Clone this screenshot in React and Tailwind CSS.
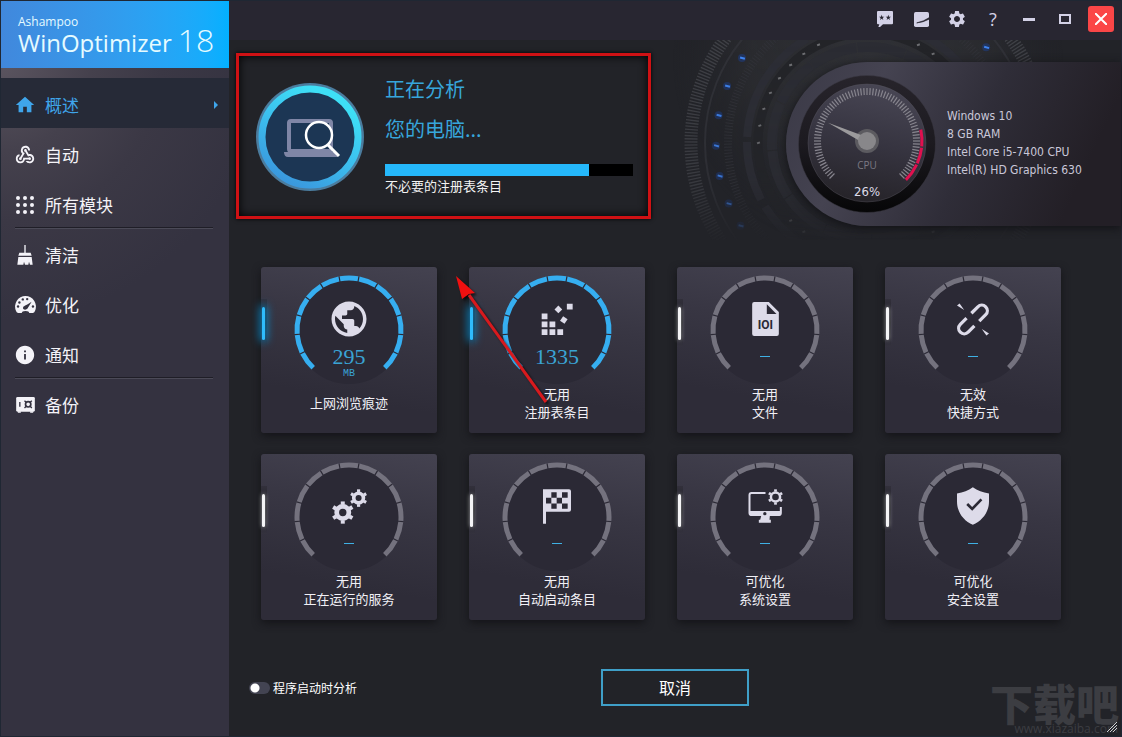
import { useState } from "react";
import { MdHome, MdInfo, MdPublic, MdSettings, MdWebhook } from "react-icons/md";

function polar(cx, cy, r, deg) {
  const a = (deg * Math.PI) / 180;
  return [cx + r * Math.cos(a), cy + r * Math.sin(a)];
}

function arc(cx, cy, r, from, to) {
  const [x1, y1] = polar(cx, cy, r, from);
  const [x2, y2] = polar(cx, cy, r, to);
  return `M${x1} ${y1}A${r} ${r} 0 ${to - from > 180 ? 1 : 0} 1 ${x2} ${y2}`;
}

function range(n) {
  return Array.from({ length: n }, (_, i) => i);
}

/* ---------- icons ---------- */

function ModulesIcon() {
  return (
    <svg viewBox="0 0 54 54" className="h-[18px] w-[18px]" fill="currentColor">
      {range(9).map((i) => (
        <circle key={i} cx={6 + (i % 3) * 21} cy={6 + Math.floor(i / 3) * 21} r="6" />
      ))}
    </svg>
  );
}

function BroomIcon() {
  return (
    <svg viewBox="0 0 48 60" className="h-5 w-4" fill="currentColor">
      <rect x="22" width="4" height="24" />
      <path d="M7 23h34l3 9H4z" />
      <path d="M4 36h40l3 23h-8l-3-9-2 9H24l-3-9-2 9H1z" />
    </svg>
  );
}

function SpeedIcon() {
  return (
    <svg viewBox="0 0 62 50" className="h-[17px] w-[21px]">
      <path
        d="M31 0a31 31 0 0 1 28 44q-2 6-7 6H10q-5 0-7-6A31 31 0 0 1 31 0z"
        fill="currentColor"
      />
      <g fill="#343240">
        <circle cx="9" cy="31" r="3.5" />
        <circle cx="13" cy="19" r="3.5" />
        <circle cx="23" cy="10" r="3.5" />
        <circle cx="36" cy="9" r="3.5" />
        <circle cx="53" cy="31" r="3.5" />
        <path d="M24 33c3-5 9-4 25-16-7 12-9 15-12 20-5 6-16 3-13-4z" />
        <path d="M20 50q0-6 11-6t11 6z" />
      </g>
    </svg>
  );
}

function SafeIcon() {
  return (
    <svg viewBox="0 0 56 48" className="h-4 w-[19px]">
      <rect width="56" height="44" rx="4" fill="currentColor" />
      <path d="M5 43h9v4H5zM42 43h9v4h-9z" fill="currentColor" />
      <g fill="none" stroke="#343240">
        <path d="M11 15v14" strokeWidth="4" />
        <circle cx="36" cy="22" r="8" strokeWidth="5" />
        <path d="M25 11l5 5M47 11l-5 5M25 33l5-5M47 33l-5-5" strokeWidth="4" />
      </g>
    </svg>
  );
}

function GearShape({ cx, cy, r, hole }) {
  return (
    <g stroke="currentColor" fill="none">
      <circle cx={cx} cy={cy} r={(r * 0.76 + hole) / 2} strokeWidth={r * 0.76 - hole} />
      {range(6).map((i) => {
        const [x1, y1] = polar(cx, cy, r * 0.7, i * 60 + 30);
        const [x2, y2] = polar(cx, cy, r, i * 60 + 30);
        return <line key={i} x1={x1} y1={y1} x2={x2} y2={y2} strokeWidth={r * 0.36} />;
      })}
    </g>
  );
}

function RegistryIcon() {
  return (
    <svg viewBox="0 0 94 94" className="h-8 w-8" fill="currentColor">
      <path d="M2 31h17v17H2zM2 54h17v17H2zM25 54h17v17H25zM2 77h17v17H2zM25 77h17v17H25zM48 77h17v17H48zM76 2h17v17H76z" />
      <rect x="43" y="11" width="16" height="16" transform="rotate(45 51 19)" />
      <rect x="59" y="42" width="16" height="16" transform="rotate(35 67 50)" />
    </svg>
  );
}

function FileIcon() {
  return (
    <svg viewBox="0 0 80 102" className="h-[34px] w-[27px]">
      <path
        d="M6 0h44l30 30v66q0 6-6 6H6q-6 0-6-6V6q0-6 6-6z"
        fill="currentColor"
      />
      <path d="M44 7v29h29z" fill="#2b2935" />
      <text
        x="40"
        y="80"
        textAnchor="middle"
        fill="#2b2935"
        className="font-['Roboto'] text-[36px] font-bold"
      >
        IOI
      </text>
    </svg>
  );
}

function BrokenLinkIcon() {
  return (
    <svg viewBox="0 0 98 100" className="h-[33px] w-8">
      <g transform="translate(49 50) rotate(-45)" fill="none" stroke="currentColor" strokeWidth="10">
        <path d="M10-17H38a17 17 0 0 1 0 34H10" />
        <path d="M-11-17H-38a17 17 0 0 0 0 34H-11" />
      </g>
      <path d="M0 7l8-6 14 20zM98 93l-8 6-14-20z" fill="currentColor" />
    </svg>
  );
}

function ServicesIcon() {
  return (
    <svg viewBox="0 0 104 104" className="h-[35px] w-[35px]">
      <GearShape cx={32} cy={70} r={33} hole={11} />
      <GearShape cx={79} cy={27} r={26} hole={9} />
    </svg>
  );
}

function FlagIcon() {
  return (
    <svg viewBox="0 0 84 104" className="h-[35px] w-7">
      <path d="M0 0h78q6 0 6 6v56q0 6-6 6H9v36H0z" fill="currentColor" />
      <path
        d="M25 9h16v17H25zM57 9h17v17H57zM9 26h16v17H9zM41 26h16v17H41zM25 43h16v16H25zM57 43h17v16H57z"
        fill="#2b2935"
      />
    </svg>
  );
}

function SystemIcon() {
  return (
    <svg viewBox="0 0 104 102" className="h-[34px] w-[35px]">
      <path
        d="M52 12H10q-6 0-6 6v54q0 6 6 6h82q6 0 6-6V54"
        fill="none"
        stroke="currentColor"
        strokeWidth="6"
      />
      <path d="M4 66h94v9q0 6-6 6H65l-1 11h4v9H32v-9h4l3-11H10q-6 0-6-6z" fill="currentColor" />
      <circle cx="50" cy="74" r="5" fill="#2b2935" />
      <GearShape cx={82} cy={24} r={23} hole={10} />
    </svg>
  );
}

function ShieldIcon() {
  return (
    <svg viewBox="0 0 97 114" className="h-[38px] w-8">
      <path
        d="M48 0C62 10 78 16 97 19v24C97 76 76 102 48 114 20 102 0 76 0 43V19C19 16 34 10 48 0z"
        fill="currentColor"
      />
      <path d="M31 51l15 15 28-29" fill="none" stroke="#2b2935" strokeWidth="8" />
    </svg>
  );
}

function FeedbackIcon() {
  return (
    <svg viewBox="0 0 48 48" className="h-4 w-4">
      <path d="M3 0h42q3 0 3 3v34q0 3-3 3H18l-9 8H4l3-8H3q-3 0-3-3V3q0-3 3-3z" fill="currentColor" />
      <path
        d="M14 11l2 6h6l-5 4 2 6-5-4-5 4 2-6-5-4h6zM34 11l2 6h6l-5 4 2 6-5-4-5 4 2-6-5-4h6z"
        fill="#282631"
      />
    </svg>
  );
}

function SkinIcon() {
  return (
    <svg viewBox="0 0 44 44" className="h-[15px] w-[15px]">
      <rect width="44" height="44" rx="5" fill="currentColor" />
      <path d="M8 32Q30 27 44 17v4Q28 30 8 32z" fill="#282631" stroke="#282631" strokeWidth="2" />
    </svg>
  );
}

/* ---------- data ---------- */

const NAV = [
  { label: "概述", icon: <MdHome className="h-[22px] w-[22px]" />, active: true },
  { label: "自动", icon: <MdWebhook className="h-[22px] w-[22px]" /> },
  { label: "所有模块", icon: <ModulesIcon />, divider: true },
  { label: "清洁", icon: <BroomIcon /> },
  { label: "优化", icon: <SpeedIcon /> },
  { label: "通知", icon: <MdInfo className="h-[22px] w-[22px]" />, divider: true },
  { label: "备份", icon: <SafeIcon /> },
];

const CARDS = [
  { lines: ["上网浏览痕迹"], value: "295", unit: "MB", icon: <MdPublic className="h-[42px] w-[42px]" /> },
  { lines: ["无用", "注册表条目"], value: "1335", icon: <RegistryIcon /> },
  { lines: ["无用", "文件"], icon: <FileIcon /> },
  { lines: ["无效", "快捷方式"], icon: <BrokenLinkIcon /> },
  { lines: ["无用", "正在运行的服务"], icon: <ServicesIcon /> },
  { lines: ["无用", "自动启动条目"], icon: <FlagIcon /> },
  { lines: ["可优化", "系统设置"], icon: <SystemIcon /> },
  { lines: ["可优化", "安全设置"], icon: <ShieldIcon /> },
];

const SPECS = ["Windows 10", "8 GB RAM", "Intel Core i5-7400 CPU", "Intel(R) HD Graphics 630"];

/* ---------- parts ---------- */

function Sidebar() {
  return (
    <aside className="flex w-[228px] shrink-0 flex-col bg-[#343240] bg-[radial-gradient(circle_at_0_60px,#5b5560_0,#45414d_90px,#3b3845_160px,#343240_260px)]">
      <div className="flex h-[67px] items-end gap-[6px] bg-linear-to-r from-[#4188dc] to-[#03b0ff] pb-3 pl-[17px] font-['Open_Sans',sans-serif] text-[#e6fbff]">
        <div>
          <div className="text-xs leading-4">Ashampoo</div>
          <div className="text-2xl leading-[26px]">WinOptimizer</div>
        </div>
        <div className="text-[32px] leading-8 font-light">18</div>
      </div>
      <nav className="pt-[10px]">
        {NAV.map((item) => (
          <div key={item.label}>
            <a
              href="#"
              className={
                item.active
                  ? "flex h-[50px] items-center gap-[9px] bg-[#262a37] pt-[3px] pr-[11px] pl-[13px] text-[#3fa5ea]"
                  : "flex h-[50px] items-center gap-[9px] pt-[3px] pr-[11px] pl-[13px] text-[#f4f3f8]"
              }
            >
              <span className="flex w-[22px] items-center justify-center">{item.icon}</span>
              <span className="grow text-[17px] leading-6">{item.label}</span>
              {item.active && (
                <svg viewBox="0 0 4 8" className="h-2 w-1" fill="currentColor">
                  <path d="M0 0l4 4-4 4z" />
                </svg>
              )}
            </a>
            {item.divider && (
              <div className="-mt-px mr-4 mb-[-1px] ml-[14px] h-[2px] border-t border-b border-t-[#1f1e27] border-b-[#4b4a57]" />
            )}
          </div>
        ))}
      </nav>
    </aside>
  );
}

function TitleBar() {
  const button = "flex h-9 w-9 items-center justify-center";
  return (
    <header className="flex h-[39px] items-center justify-end bg-[#282631] pr-[2px] pb-[3px] text-[#d3d1e6]">
      <button aria-label="Feedback" className={button}>
        <FeedbackIcon />
      </button>
      <button aria-label="Skin" className={button}>
        <SkinIcon />
      </button>
      <button aria-label="Settings" className={button}>
        <MdSettings className="h-5 w-5" />
      </button>
      <button aria-label="Help" className={button}>
        <span className="font-['Open_Sans',sans-serif] text-lg">?</span>
      </button>
      <button aria-label="Minimize" className={button}>
        <span className="h-[3px] w-3 bg-current" />
      </button>
      <button aria-label="Maximize" className={button}>
        <span className="h-[10px] w-3 border-2 border-current" />
      </button>
      <button aria-label="Close" className={button}>
        <span className="flex h-[26px] w-[26px] items-center justify-center rounded-[3px] bg-[#fb4647] text-white">
          <svg viewBox="0 0 12 12" className="h-3 w-3" stroke="currentColor" strokeWidth="2">
            <path d="M0 0l12 12M12 0L0 12" />
          </svg>
        </span>
      </button>
    </header>
  );
}

function ScanIcon() {
  return (
    <svg viewBox="0 0 108 108" className="h-[108px] w-[108px] shrink-0">
      <defs>
        <linearGradient id="scanRing" x1="0.2" y1="1" x2="0.7" y2="0.1">
          <stop offset="0" stopColor="#3a94dc" />
          <stop offset="0.6" stopColor="#3cc4f0" />
          <stop offset="1" stopColor="#3edff6" />
        </linearGradient>
      </defs>
      <circle cx="54" cy="54" r="54" fill="#4b7c9e" />
      <circle cx="54" cy="54" r="48" fill="#1c3654" stroke="url(#scanRing)" strokeWidth="7" />
      <rect x="33" y="38" width="42" height="30" rx="2" fill="none" stroke="#7f86a6" strokeWidth="4" />
      <path d="M28 69h50l4 5H32q-4 0-4-5z" fill="#7f86a6" />
      <circle cx="63" cy="52" r="13" fill="#1c3654" stroke="#fff" strokeWidth="2.5" />
      <path d="M72 62l11 11" stroke="#fff" strokeWidth="3" />
    </svg>
  );
}

function ScanStatus() {
  return (
    <div className="flex h-[166px] w-[415px] gap-[21px] border-[3px] border-[#cf1114] pr-[15px] pl-[17px] shadow-[0_0_4px_#000,inset_0_0_10px_#000]">
      <div className="pt-[27px]">
        <ScanIcon />
      </div>
      <div className="grow pt-[13px]">
        <h1 className="text-xl leading-10 text-[#37a6dc]">
          正在分析
          <br />
          您的电脑...
        </h1>
        <div
          role="progressbar"
          aria-label="不必要的注册表条目"
          aria-valuenow={82}
          className="mt-[15px] h-3 bg-black"
        >
          <div className="h-full bg-[#25b8fb]" style={{ width: "82.3%" }} />
        </div>
        <p className="text-[13px] leading-5 text-[#f2f2f2]">不必要的注册表条目</p>
      </div>
    </div>
  );
}

function TechRings() {
  const cx = 199;
  const cy = 103;
  return (
    <svg
      viewBox="0 0 452 200"
      className="pointer-events-none absolute top-0 right-0 h-[200px] w-[452px]"
      fill="none"
    >
      <defs>
        <linearGradient id="ringFade" x1="0" y1="0" x2="0" y2="1">
          <stop offset="0" stopColor="#fff" />
          <stop offset="0.7" stopColor="#fff" stopOpacity="0.8" />
          <stop offset="1" stopColor="#fff" stopOpacity="0.05" />
        </linearGradient>
        <mask id="ringMask">
          <rect width="452" height="200" fill="url(#ringFade)" />
        </mask>
        <radialGradient id="ringGlow" cx="199" cy="20" r="195" gradientUnits="userSpaceOnUse">
          <stop offset="0" stopColor="#303136" />
          <stop offset="0.6" stopColor="#2c2d31" stopOpacity="0.8" />
          <stop offset="1" stopColor="#222328" stopOpacity="0" />
        </radialGradient>
      </defs>
      <rect width="452" height="200" fill="url(#ringGlow)" mask="url(#ringMask)" />
      <g mask="url(#ringMask)">
        <circle cx={cx} cy={cy} r="177" stroke="#4d4e54" strokeOpacity="0.65" strokeWidth="13" strokeDasharray="1.4 1.69" />
        <circle cx={cx} cy={cy} r="163" stroke="#303137" strokeWidth="2" />
        <circle cx={cx} cy={cy} r="140" stroke="#303137" strokeWidth="8" strokeDasharray="1 2" />
        <circle cx={cx} cy={cy} r="121" stroke="#2c2d35" strokeWidth="8" strokeDasharray="120 8 60 5" />
        <circle cx={cx} cy={cy} r="110" stroke="#232428" strokeWidth="9" />
        <circle cx={cx} cy={cy} r="96" stroke="#2b2c33" strokeWidth="10" strokeDasharray="48 1" />
        {range(36).map((i) => {
          const [x, y] = polar(cx, cy, 110, i * 9 + 180);
          return (
            <rect
              key={i}
              x={x - 1}
              y={y - 1}
              width="3"
              height="2"
              fill="#6f7074"
              transform={`rotate(-20 ${x} ${y})`}
            />
          );
        })}
        {[147, 156.5, 167.5, 179, 190.5, 202, 214, 321].map((deg) => {
          const [x, y] = polar(cx, cy, 152, deg);
          return (
            <g key={deg}>
              <circle cx={x} cy={y} r="4" fill="#1846a8" fillOpacity="0.4" />
              <rect x={x - 2} y={y - 1} width="5" height="2" fill="#3f86f5" transform={`rotate(15 ${x} ${y})`} />
            </g>
          );
        })}
      </g>
    </svg>
  );
}

function CpuGauge({ percent }) {
  const start = 135;
  const needle = start + (percent / 100) * 270;
  return (
    <svg viewBox="0 0 164 164" className="h-[164px] w-[164px] shrink-0">
      <defs>
        <linearGradient id="dial" x1="0.6" y1="0" x2="0.4" y2="1">
          <stop offset="0" stopColor="#484654" />
          <stop offset="0.5" stopColor="#363440" />
          <stop offset="1" stopColor="#252328" />
        </linearGradient>
        <linearGradient id="well" x1="0" y1="0" x2="0" y2="1">
          <stop offset="0" stopColor="#27242b" />
          <stop offset="0.5" stopColor="#1c1a20" />
          <stop offset="1" stopColor="#060607" />
        </linearGradient>
      </defs>
      <circle cx="81" cy="82" r="68.5" fill="url(#well)" stroke="#3a3842" strokeOpacity="0.5" />
      <circle cx="81" cy="81" r="59" fill="url(#dial)" stroke="#58565f" strokeOpacity="0.4" />
      {range(79).map((i) => {
        const deg = start + (i * 270) / 78;
        const [x1, y1] = polar(81, 79, 46, deg);
        const [x2, y2] = polar(81, 79, 53, deg);
        return <line key={i} x1={x1} y1={y1} x2={x2} y2={y2} stroke="#87858e" strokeWidth="1.2" />;
      })}
      {[
        [-12, 5.5],
        [7, 24],
        [25.5, 45],
      ].map(([from, to]) => (
        <path key={from} d={arc(81, 79, 55, from, to)} fill="none" stroke="#e0104f" strokeWidth="3" />
      ))}
      <circle cx="81" cy="79" r="12" fill="#5c5b60" />
      <path d="M81 75.5L124 79 81 82.5z" fill="#9b9a9c" transform={`rotate(${needle} 81 79)`} />
      <circle cx="81" cy="79" r="9" fill="#88878a" />
      <text x="81" y="107" textAnchor="middle" fill="#7b7983" className="font-['Open_Sans',sans-serif] text-[10px]">
        CPU
      </text>
      <text
        x="81"
        y="134"
        textAnchor="middle"
        fill="#dddbe8"
        className="font-['DejaVu_Sans_Condensed','DejaVu_Sans',sans-serif] text-[13px]"
      >
        {percent}%
      </text>
    </svg>
  );
}

function SystemPanel() {
  return (
    <div className="relative mt-[9px] flex h-[164px] w-[335px] items-center rounded-l-full bg-linear-[115deg,#3a3946_0%,#454351_25%,#2f2d38_55%,#231f26_85%] shadow-[0_2px_10px_#121216]">
      <CpuGauge percent={26} />
      <ul className="-ml-[3px] pb-[2px] font-['DejaVu_Sans_Condensed','DejaVu_Sans',sans-serif] text-xs leading-[18px] whitespace-nowrap text-[#c9c7d8]">
        {SPECS.map((s) => (
          <li key={s}>{s}</li>
        ))}
      </ul>
    </div>
  );
}

function ModuleCard({ lines, value, unit, icon }) {
  const done = Boolean(value);
  return (
    <button className="relative flex h-[166px] flex-col items-center rounded-[3px] bg-linear-[190deg,#444250_0%,#383643_35%,#2e2c38_75%] pt-[3px] shadow-[0_3px_8px_#141418]">
      <span className="absolute top-8 left-0 h-12 w-[6px] bg-linear-to-b from-[#32303b] via-[#202026] to-[#34323e]" />
      <span
        className={
          done
            ? "absolute top-10 left-px h-[33px] w-[3px] rounded-sm bg-[#2fbcfc] shadow-[0_0_9px_2px_#0b86c4]"
            : "absolute top-10 left-px h-[33px] w-[3px] rounded-sm bg-[#f4f4f6] shadow-[0_0_4px_#a9a9ad]"
        }
      />
      <span className="relative flex h-[115px] w-[120px] flex-col items-center">
        <svg viewBox="0 0 120 120" className="absolute top-0 left-0 h-[120px] w-[120px]" fill="none">
          <circle cx="60" cy="60" r="54" fill="#2b2935" />
          {range(13).map((i) => {
            const mid = (i - 6) * 21.1 - 90;
            return (
              <path
                key={i}
                d={arc(60, 60, 52, mid - 9.9, mid + 9.9)}
                stroke={done ? "#36aef0" : "#74727e"}
                strokeWidth="5"
              />
            );
          })}
        </svg>
        <span className="relative mt-[27px] flex h-11 items-center text-[#dddbe9]">{icon}</span>
        {done ? (
          <span className="relative mt-1 font-['Liberation_Serif',serif] text-[22px] leading-6 text-[#3aa3d4]">
            {value}
          </span>
        ) : (
          <span className="relative mt-[15px] h-px w-[10px] bg-[#3fb0e4]" />
        )}
        {unit && (
          <span className="relative mt-px font-['Liberation_Mono',monospace] text-[10px] leading-2 text-[#3aa3d4]">
            {unit}
          </span>
        )}
      </span>
      <span className="flex h-9 flex-col justify-center text-[13px] leading-[18px] text-[#f1f0f6]">
        {lines.map((l) => (
          <span key={l}>{l}</span>
        ))}
      </span>
    </button>
  );
}

function Pointer() {
  return (
    <svg
      viewBox="0 0 100 136"
      className="pointer-events-none absolute top-[271px] left-[223px] h-[136px] w-[100px] drop-shadow-[2px_2px_1px_#000000a0]"
    >
      <path d="M17 23L94 130" stroke="#d81a1e" strokeWidth="3" />
      <path d="M4 4l19 17-6 1-7 5z" fill="#f01010" />
    </svg>
  );
}

function Watermark() {
  return (
    <div className="pointer-events-none absolute right-0 bottom-0 text-right text-[#3c3d42] select-none">
      <div className="pr-[2px] text-[43px] leading-10 font-black">下载吧</div>
      <div className="pr-[3px] font-['Open_Sans',sans-serif] text-xs leading-[14px]">www.xiazaiba.com</div>
      <svg viewBox="0 0 10 10" className="absolute right-1 bottom-1 h-[10px] w-[10px]" stroke="#cfcfd2">
        <path d="M0 10L10 0M3 10l7-7M6 10l4-4" />
      </svg>
    </div>
  );
}

export default function App() {
  const [autoScan, setAutoScan] = useState(false);

  return (
    <div className="flex min-h-screen border border-[#1f2733] bg-[#222328] font-['Noto_Sans_CJK_SC',sans-serif]">
      <Sidebar />
      <main className="relative flex grow flex-col">
        <TitleBar />
        <section className="relative flex items-start justify-between pt-[13px] pl-[7px]">
          <TechRings />
          <ScanStatus />
          <SystemPanel />
        </section>
        <section className="mt-[41px] grid grid-cols-4 gap-x-8 gap-y-[21px] pr-[60px] pl-8">
          {CARDS.map((card) => (
            <ModuleCard key={card.lines.join()} {...card} />
          ))}
        </section>
        <footer className="mt-[49px] grid grid-cols-[1fr_auto_1fr] items-center px-5">
          <label className="flex items-center gap-[3px] text-xs leading-5 text-white">
            <input
              type="checkbox"
              checked={autoScan}
              onChange={(e) => setAutoScan(e.target.checked)}
              className="h-3 w-[21px] appearance-none rounded-full bg-[#434452] bg-[radial-gradient(circle_at_6px_6px,#fff_4px,transparent_5px)] checked:bg-[#25b8fb]"
            />
            程序启动时分析
          </label>
          <button className="h-[37px] w-[148px] border-2 border-[#3f9fc8] pb-[2px] text-base leading-6 text-white">
            取消
          </button>
          <span />
        </footer>
        <Pointer />
        <Watermark />
      </main>
    </div>
  );
}
